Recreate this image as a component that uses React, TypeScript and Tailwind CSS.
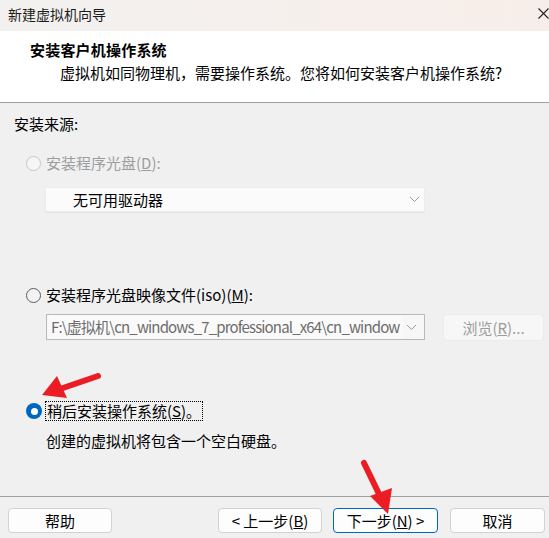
import React from "react";

const font = {
  fontFamily: '"Noto Sans CJK SC", "Noto Sans", sans-serif',
};

function Radio({ state }: { state: "off" | "disabled" | "on" }) {
  if (state === "on") {
    return (
      <span className="w-[16px] h-[16px] rounded-full bg-[#0067c0] flex items-center justify-center shrink-0">
        <span className="w-[7px] h-[7px] rounded-full bg-white" />
      </span>
    );
  }
  return (
    <span
      className={
        state === "disabled"
          ? "w-[15px] h-[15px] rounded-full border border-[#c6c6c6] bg-[#f6f6f6] shrink-0"
          : "w-[15px] h-[15px] rounded-full border border-[#5c5c5c] bg-[#f3f3f3] shrink-0"
      }
    />
  );
}

function Chevron() {
  return (
    <svg width="11" height="7" viewBox="0 0 11 7" className="shrink-0">
      <path d="M1 1 L5.5 5.5 L10 1" fill="none" stroke="#9a9a9a" strokeWidth="1" />
    </svg>
  );
}

function Btn({
  children,
  className,
}: {
  children: React.ReactNode;
  className: string;
}) {
  return (
    <div
      className={
        "h-[25px] rounded-[4px] bg-[#fdfdfd] flex items-center justify-center text-[15px] leading-5 text-black whitespace-nowrap " +
        className
      }
    >
      {children}
    </div>
  );
}

export default function App() {
  return (
    <div
      style={font}
      className="relative w-[549px] h-[538px] overflow-hidden bg-[#f0f0f0] text-black"
    >
      {/* title bar */}
      <div className="h-[31px] bg-gradient-to-r from-[#f2f1f0] to-[#f8eee9] flex items-center justify-between pl-[8px]">
        <span className="text-[14px] leading-5 text-[#1a1a1a] -mt-[3px]">新建虚拟机向导</span>
        <svg width="11" height="11" viewBox="0 0 11 11" className="-mt-[5px]">
          <path d="M0.5 0.5 L10.5 10.5 M10.5 0.5 L0.5 10.5" stroke="#222" strokeWidth="1.1" />
        </svg>
      </div>

      {/* header */}
      <div className="h-[72px] bg-white border-b border-[#a0a0a0]">
        <div className="pl-[30px] pt-[9px] text-[15px] leading-5 font-bold tracking-[0.2px]">
          安装客户机操作系统
        </div>
        <div className="pl-[60px] pt-[3px] text-[15px] leading-5">
          虚拟机如同物理机，需要操作系统。您将如何安装客户机操作系统?
        </div>
      </div>

      {/* body */}
      <div className="h-[393px] flex flex-col">
        <div className="pl-[14px] mt-[11px] h-5 text-[15px] leading-5">安装来源:</div>

        <div className="pl-[26px] mt-[19px] h-5 flex items-center gap-[5px] text-[15px] leading-5 text-[#9d9d9d]">
          <Radio state="disabled" />
          <span>
            安装程序光盘(<span className="underline">D</span>):
          </span>
        </div>

        <div className="ml-[45px] mt-[14px] w-[380px] h-[25px] bg-[#fbfbfb] border border-[#ececec] rounded-[2px] shadow-[0_1px_1px_rgba(0,0,0,0.06)] flex items-center justify-between pl-[27px] pr-[4px]">
          <span className="text-[15px] leading-5">无可用驱动器</span>
          <Chevron />
        </div>

        <div className="pl-[26px] mt-[73px] h-5 flex items-center gap-[5px] text-[15px] leading-5">
          <Radio state="off" />
          <span>
            安装程序光盘映像文件(iso)(<span className="underline">M</span>):
          </span>
        </div>

        <div className="mt-[9px] h-[27px] flex items-start">
          <div className="ml-[46px] w-[379px] h-[26px] border border-[#b9b9b9] bg-[#f7f7f7] flex items-center pr-[4px]">
            <div className="w-[354px] h-[22px] ml-[2px] bg-[#fafafa] overflow-hidden whitespace-nowrap text-[15px] leading-[22px] tracking-[-0.85px] text-[#6d6d6d] pl-[2px]">
              F:\虚拟机\cn_windows_7_professional_x64\cn_window
            </div>
            <div className="flex-1 flex justify-center">
              <Chevron />
            </div>
          </div>
          <div className="ml-[18px] w-[101px] h-[27px] rounded-[4px] bg-[#f7f7f7] border border-[#ececec] flex items-center justify-center text-[15px] leading-5 text-[#9d9d9d] whitespace-nowrap">
            浏览(<span className="underline">R</span>)...
          </div>
        </div>

        <div className="pl-[26px] mt-[60px] h-5 flex items-center gap-[3px] text-[15px] leading-5">
          <Radio state="on" />
          <span className="border border-dotted border-black px-[1px] h-[20px] leading-[18px]">
            稍后安装操作系统(<span className="underline">S</span>)。
          </span>
        </div>

        <div className="pl-[46px] mt-[10px] h-5 text-[15px] leading-5">
          创建的虚拟机将包含一个空白硬盘。
        </div>
      </div>

      {/* footer */}
      <div className="border-t border-[#a0a0a0] pt-[11px] flex items-start">
        <Btn className="ml-[8px] w-[104px] border border-[#d2d2d2]">帮助</Btn>
        <Btn className="ml-[106px] w-[104px] border border-[#d2d2d2]">
          &lt; 上一步(<span className="underline">B</span>)
        </Btn>
        <Btn className="ml-[11px] w-[105px] border border-[#0067c0]">
          下一步(<span className="underline">N</span>) &gt;
        </Btn>
        <Btn className="ml-[12px] w-[95px] border border-[#d2d2d2]">取消</Btn>
      </div>

      {/* red annotation arrows */}
      <svg
        className="absolute inset-0 pointer-events-none"
        width="549"
        height="538"
        viewBox="0 0 549 538"
      >
        <line x1="98" y1="376" x2="60" y2="389" stroke="#ec1c24" strokeWidth="6" strokeLinecap="round" />
        <polygon points="42,395 57,376 67,398" fill="#ec1c24" />
        <line x1="364" y1="463" x2="380" y2="496" stroke="#ec1c24" strokeWidth="6" strokeLinecap="round" />
        <polygon points="388,514 370,496 392,488" fill="#ec1c24" />
      </svg>
    </div>
  );
}
